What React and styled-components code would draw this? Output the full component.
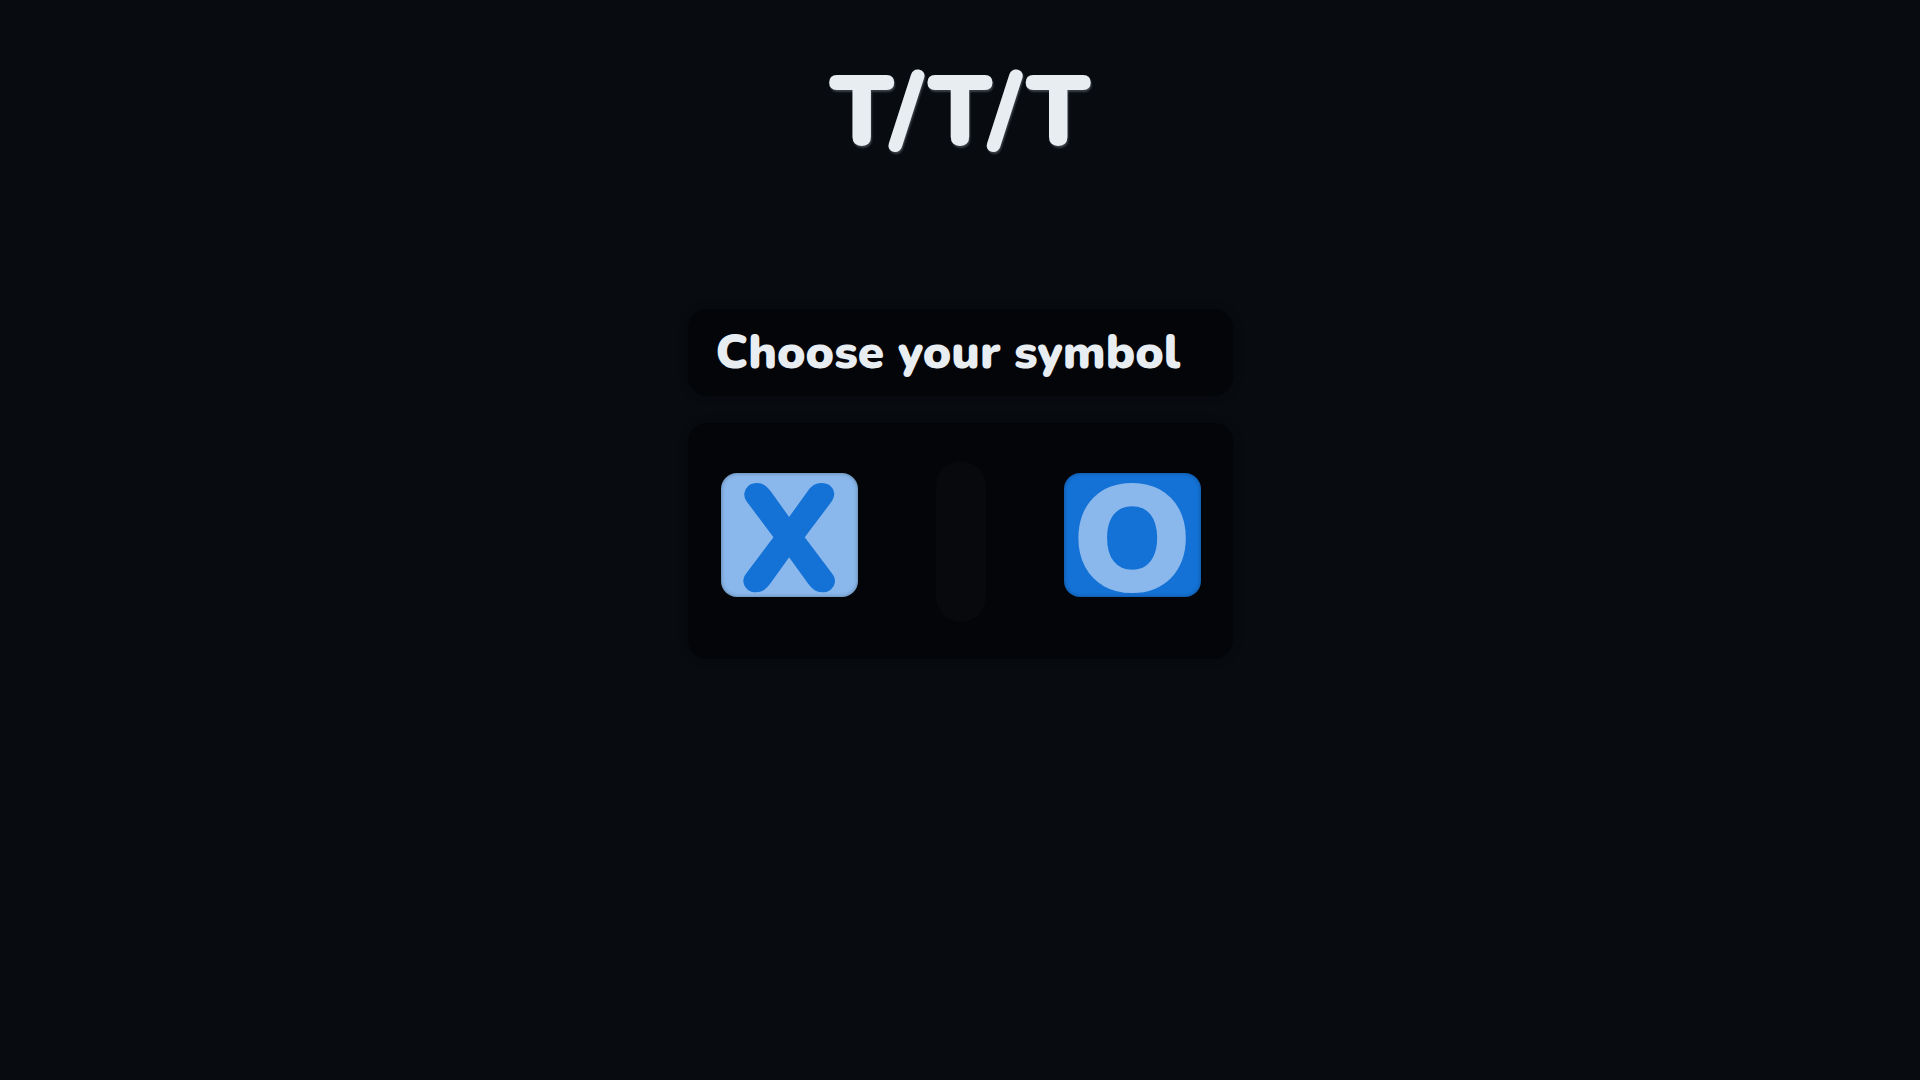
import React, { useState } from "react";
import styled, { createGlobalStyle } from "styled-components";

const GlobalStyle = createGlobalStyle`
  html, body {
    margin: 0;
    padding: 0;
    background: #080b10;
  }
  body {
    font-family: "Nunito", "Lato", "Open Sans", sans-serif;
    color: #e8edf2;
  }
`;

const Page = styled.main`
  min-height: 100vh;
  display: flex;
  flex-direction: column;
  align-items: center;
  padding-top: 52px;
  box-sizing: border-box;
`;

const Title = styled.h1`
  margin: 0;
  font-size: 100px;
  font-weight: 900;
  line-height: 1.2;
  color: #e8edf2;
  text-shadow: 1px 2px 2px #3c4148;
`;

const Panel = styled.section`
  width: 545px;
  box-sizing: border-box;
  background: #030509;
  border-radius: 20px;
  box-shadow: 0 0 8px rgba(0, 0, 0, 0.35);
`;

const HeadingPanel = styled(Panel)`
  height: 87px;
  margin-top: 137px;
  display: flex;
  align-items: center;
  padding: 0 28px;
`;

const Heading = styled.h2`
  margin: 0;
  font-size: 47.5px;
  font-weight: 900;
  color: #e8edf2;
`;

const ChoicePanel = styled(Panel)`
  height: 236px;
  margin-top: 27px;
  display: flex;
  align-items: center;
  justify-content: space-between;
  padding: 0 32px 0 33px;
`;

const SymbolButton = styled.button`
  width: 137px;
  height: 124px;
  margin-bottom: 12px;
  border: none;
  border-radius: 16px;
  padding: 14px 0 0;
  box-sizing: border-box;
  display: flex;
  align-items: center;
  justify-content: center;
  font-family: inherit;
  font-size: 150px;
  font-weight: 900;
  line-height: 1;
  cursor: pointer;
  background: ${(p) => (p.$light ? "#8ab8ec" : "#1472d6")};
  color: ${(p) => (p.$light ? "#1472d6" : "#8ab8ec")};
  box-shadow: inset 0 0 4px rgba(0, 0, 0, 0.35);
`;

const Divider = styled.div`
  width: 50px;
  height: 161px;
  border-radius: 25px;
  background: #07090c;
`;

export default function App() {
  const [symbol, setSymbol] = useState(null);

  return (
    <>
      <GlobalStyle />
      <Page>
        <Title>T/T/T</Title>
        <HeadingPanel>
          <Heading>Choose your symbol</Heading>
        </HeadingPanel>
        <ChoicePanel>
          <SymbolButton $light onClick={() => setSymbol("X")}>
            X
          </SymbolButton>
          <Divider />
          <SymbolButton onClick={() => setSymbol("O")}>O</SymbolButton>
        </ChoicePanel>
      </Page>
    </>
  );
}
